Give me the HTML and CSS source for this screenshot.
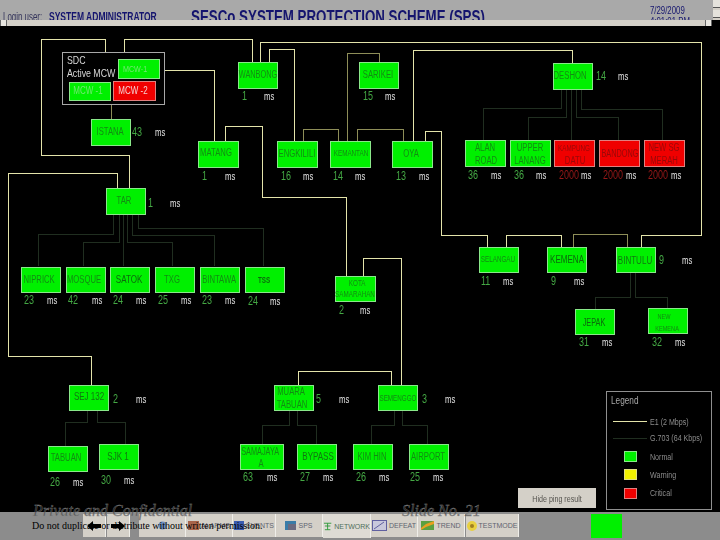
FILE: index.html
```html
<!DOCTYPE html>
<html lang="en">
<head>
<meta charset="utf-8">
<title>SESCo System Protection Scheme (SPS)</title>
<link rel="stylesheet" href="styles.css">
</head>
<body>
<div class="page">
  <header class="header">
    <div class="header-main">
      <span class="login">Login user:</span>
      <span class="user">SYSTEM ADMINISTRATOR</span>
      <h1 class="title">SESCo SYSTEM PROTECTION SCHEME (SPS)</h1>
      <div class="clock"><div>7/29/2009</div><div>4:01:01 PM</div></div>
    </div>
    <div class="vscroll"><span class="sbtn"></span><span class="sbtn"></span></div>
  </header>
  <div class="hscroll"><span class="hbtn"></span><span class="hspace"></span><span class="hbtn"></span><span class="hcorner"></span></div>

  <svg class="diagram" width="720" height="486" viewBox="0 26 720 486" xmlns="http://www.w3.org/2000/svg">
    <g class="e1">
      <path d="M105.5 52V39.5H41.5V155.5H129.5V188"/>
      <path d="M124.5 52V39.5H252.5V62"/>
      <path d="M165 70.5H214.5V141"/>
      <path d="M260.5 62V42.5H701.5V235.5H641.5V247"/>
      <path d="M269.5 62V49.5H294.5V141"/>
      <path d="M413.5 141V50.5H572.5V63"/>
      <path d="M425.5 141V131.5H441.5V235.5H487.5V247"/>
      <path d="M506.5 247V235.5H561.5V247"/>
      <path d="M117.5 188V173.5H8.5V356.5H91.5V385"/>
      <path d="M225.5 141V126.5H262.5V197.5H346.5V276"/>
      <path d="M298.5 385V371.5H391.5V385"/>
      <path d="M363.5 276V258.5H401.5V385"/>
    </g>
    <g class="e1-dim">
      <path d="M347.5 141V53.5H379.5V62"/>
      <path d="M303.5 141V129.5H338.5V141"/>
      <path d="M357.5 141V129.5H403.5V141"/>
      <path d="M573.5 247V234.5H627.5V247"/>
      <path d="M111.5 104V119"/>
    </g>
    <g class="g703">
      <path d="M561.5 89V108.5H483.5V140"/>
      <path d="M566.5 89V117.5H528.5V140"/>
      <path d="M571.5 89V140"/>
      <path d="M576.5 89V117.5H618.5V140"/>
      <path d="M581.5 89V109.5H662.5V140"/>
      <path d="M113.5 214V234.5H38.5V266"/>
      <path d="M119.5 214V242.5H83.5V266"/>
      <path d="M123.5 214V266"/>
      <path d="M127.5 214V242.5H172.5V266"/>
      <path d="M132.5 214V235.5H214.5V266"/>
      <path d="M138.5 214V228.5H263.5V266"/>
      <path d="M630.5 273V297.5H595.5V309"/>
      <path d="M635.5 273V297.5H667.5V308"/>
      <path d="M87.5 411V422.5H65.5V446"/>
      <path d="M97.5 411V422.5H125.5V444"/>
      <path d="M289.5 411V425.5H262.5V444"/>
      <path d="M297.5 411V425.5H316.5V444"/>
      <path d="M394.5 411V425.5H371.5V444"/>
      <path d="M402.5 411V425.5H427.5V444"/>
    </g>

    <!-- SDC panel -->
    <rect class="panel" x="62.5" y="52.5" width="102" height="52"/>
    <text class="sdc" x="67" y="64">SDC</text>
    <text class="sdc" x="67" y="77">Active MCW :</text>
    <rect class="ok" x="118.5" y="59.5" width="41" height="19"/><text class="pale small c" x="135" y="72">MCW-1</text>
    <rect class="ok" x="69.5" y="82.5" width="41" height="18"/><text class="pale c" x="88" y="94">MCW -1</text>
    <rect class="bad" x="113.5" y="81.5" width="42" height="19"/><text class="white c" x="133" y="94">MCW -2</text>

    <!-- nodes -->
    <g class="nodes">
      <rect class="ok" x="238.5" y="62.5" width="39" height="26"/><text class="c n" x="258" y="78">WANBONG</text>
      <rect class="ok" x="359.5" y="62.5" width="39" height="26"/><text class="c" x="378" y="78">SARIKEI</text>
      <rect class="ok" x="553.5" y="63.5" width="39" height="26"/><text class="c" x="570" y="79">DESHON</text>
      <rect class="ok" x="91.5" y="119.5" width="39" height="26"/><text class="c" x="110" y="135">ISTANA</text>
      <rect class="ok" x="198.5" y="141.5" width="40" height="26"/><text class="c" x="216" y="156">MATANG</text>
      <rect class="ok" x="277.5" y="141.5" width="40" height="26"/><text class="c" x="297" y="157">ENGKILILI</text>
      <rect class="ok" x="330.5" y="141.5" width="40" height="26"/><text class="c s" x="351" y="156">KEMANTAN</text>
      <rect class="ok" x="392.5" y="141.5" width="40" height="26"/><text class="c" x="411" y="157">OYA</text>
      <rect class="ok" x="465.5" y="140.5" width="40" height="26"/><text class="c" x="485" y="151">ALAN</text><text class="c" x="486" y="164">ROAD</text>
      <rect class="ok" x="510.5" y="140.5" width="40" height="26"/><text class="c" x="530" y="151">UPPER</text><text class="c" x="530" y="164">LANANG</text>
      <rect class="bad" x="554.5" y="140.5" width="40" height="26"/><text class="c d s" x="574" y="151">KAMPUNG</text><text class="c d" x="575" y="164">DATU</text>
      <rect class="bad" x="599.5" y="140.5" width="40" height="26"/><text class="c d n" x="620" y="157">BANDONG</text>
      <rect class="bad" x="644.5" y="140.5" width="40" height="26"/><text class="c d" x="664" y="151">NEW SG</text><text class="c d" x="664" y="164">MERAH</text>
      <rect class="ok" x="106.5" y="188.5" width="39" height="26"/><text class="c" x="124" y="204">TAR</text>
      <rect class="ok" x="21.5" y="267.5" width="39" height="25"/><text class="c" x="39" y="283">NIPRICK</text>
      <rect class="ok" x="66.5" y="267.5" width="39" height="25"/><text class="c" x="84" y="283">MOSQUE</text>
      <rect class="ok" x="110.5" y="267.5" width="39" height="25"/><text class="c strong" x="129" y="283">SATOK</text>
      <rect class="ok" x="155.5" y="267.5" width="39" height="25"/><text class="c" x="172" y="283">TXG</text>
      <rect class="ok" x="200.5" y="267.5" width="39" height="25"/><text class="c" x="219" y="283">BINTAWA</text>
      <rect class="ok" x="245.5" y="267.5" width="39" height="25"/><text class="c strong b" x="264" y="283">TSS</text>
      <rect class="ok" x="335.5" y="276.5" width="40" height="25"/><text class="c t" x="357" y="286">KOTA</text><text class="c t" x="355" y="297">SAMARAHAN</text>
      <rect class="ok" x="479.5" y="247.5" width="39" height="25"/><text class="c s" x="498" y="262">SELANGAU</text>
      <rect class="ok" x="547.5" y="247.5" width="39" height="25"/><text class="c strong" x="567" y="263">KEMENA</text>
      <rect class="ok" x="616.5" y="247.5" width="39" height="25"/><text class="c n2" x="635" y="264">BINTULU</text>
      <rect class="ok" x="575.5" y="309.5" width="39" height="25"/><text class="c strong j" x="594" y="326">JEPAK</text>
      <rect class="ok" x="648.5" y="308.5" width="39" height="25"/><text class="c t2" x="664" y="319">NEW</text><text class="c t2" x="667" y="331">KEMENA</text>
      <rect class="ok" x="69.5" y="385.5" width="39" height="25"/><text class="c n2" x="89" y="400">SEJ 132</text>
      <rect class="ok" x="274.5" y="385.5" width="39" height="25"/><text class="c" x="291" y="395">MUARA</text><text class="c" x="292" y="408">TABUAN</text>
      <rect class="ok" x="378.5" y="385.5" width="39" height="25"/><text class="c s" x="398" y="401">SEMENGGO</text>
      <rect class="ok" x="48.5" y="446.5" width="39" height="25"/><text class="c" x="66" y="461">TABUAN</text>
      <rect class="ok" x="99.5" y="444.5" width="39" height="25"/><text class="c n2" x="118" y="460">SJK 1</text>
      <rect class="ok" x="240.5" y="444.5" width="43" height="25"/><text class="c n" x="260" y="455">SAMAJAYA</text><text class="c" x="261" y="467">A</text>
      <rect class="ok" x="297.5" y="444.5" width="39" height="25"/><text class="c n2" x="318" y="460">BYPASS</text>
      <rect class="ok" x="353.5" y="444.5" width="39" height="25"/><text class="c" x="372" y="460">KIM HIN</text>
      <rect class="ok" x="409.5" y="444.5" width="39" height="25"/><text class="c" x="428" y="460">AIRPORT</text>
    </g>

    <!-- latency readouts -->
    <g class="num">
      <text x="242" y="100">1</text><text x="132" y="136">43</text><text x="148" y="207">1</text>
      <text x="363" y="100">15</text><text x="596" y="80">14</text><text x="202" y="180">1</text>
      <text x="281" y="180">16</text><text x="333" y="180">14</text><text x="396" y="180">13</text>
      <text x="468" y="179">36</text><text x="514" y="179">36</text>
      <text class="nr" x="559" y="179">2000</text><text class="nr" x="603" y="179">2000</text><text class="nr" x="648" y="179">2000</text>
      <text x="24" y="304">23</text><text x="68" y="304">42</text><text x="113" y="304">24</text>
      <text x="158" y="304">25</text><text x="202" y="304">23</text><text x="248" y="305">24</text>
      <text x="339" y="314">2</text><text x="481" y="285">11</text><text x="551" y="285">9</text>
      <text x="659" y="264">9</text><text x="579" y="346">31</text><text x="652" y="346">32</text>
      <text x="113" y="403">2</text><text x="316" y="403">5</text><text x="422" y="403">3</text>
      <text x="50" y="486">26</text><text x="101" y="484">30</text><text x="243" y="481">63</text>
      <text x="300" y="481">27</text><text x="356" y="481">26</text><text x="410" y="481">25</text>
    </g>
    <g class="ms">
      <text x="264" y="100">ms</text><text x="155" y="136">ms</text><text x="170" y="207">ms</text>
      <text x="385" y="100">ms</text><text x="618" y="80">ms</text><text x="225" y="180">ms</text>
      <text x="303" y="180">ms</text><text x="355" y="180">ms</text><text x="419" y="180">ms</text>
      <text x="491" y="179">ms</text><text x="536" y="179">ms</text><text x="581" y="179">ms</text>
      <text x="626" y="179">ms</text><text x="671" y="179">ms</text>
      <text x="47" y="304">ms</text><text x="92" y="304">ms</text><text x="136" y="304">ms</text>
      <text x="181" y="304">ms</text><text x="225" y="304">ms</text><text x="270" y="305">ms</text>
      <text x="360" y="314">ms</text><text x="503" y="285">ms</text><text x="574" y="285">ms</text>
      <text x="682" y="264">ms</text><text x="602" y="346">ms</text><text x="675" y="346">ms</text>
      <text x="136" y="403">ms</text><text x="339" y="403">ms</text><text x="445" y="403">ms</text>
      <text x="73" y="486">ms</text><text x="124" y="484">ms</text><text x="267" y="481">ms</text>
      <text x="323" y="481">ms</text><text x="379" y="481">ms</text><text x="433" y="481">ms</text>
    </g>

    <!-- legend -->
    <rect class="legend" x="606.5" y="391.5" width="105" height="118"/>
    <g class="leg-text">
      <text class="leg-title" x="611" y="404">Legend</text>
      <text x="650" y="425">E1 (2 Mbps)</text>
      <text x="650" y="441">G.703 (64 Kbps)</text>
      <text x="650" y="460">Normal</text>
      <text x="650" y="478">Warning</text>
      <text x="650" y="496">Critical</text>
    </g>
    <path class="e1" d="M613 421.5H647"/>
    <path class="g703" d="M613 438.5H647"/>
    <rect class="ok" x="624.5" y="451.5" width="12" height="10"/>
    <rect class="warn" x="624.5" y="469.5" width="12" height="10"/>
    <rect class="bad" x="624.5" y="488.5" width="12" height="10"/>
  </svg>

  <button class="hide-ping"><span>Hide ping result</span></button>

  <footer class="toolbar">
    <div class="tool tool-nav"><svg width="14" height="10" viewBox="0 0 14 10"><path d="M0 5L6 0V3H14V7H6V10Z"/></svg></div>
    <div class="tool tool-nav"><svg width="14" height="10" viewBox="0 0 14 10"><path d="M14 5L8 0V3H0V7H8V10Z"/></svg></div>
    <div class="tool-gap"></div>
    <div class="tool tool-a"><svg width="9" height="9" viewBox="0 0 9 9"><circle cx="4.5" cy="4.5" r="4" fill="#6f8fc0"/></svg></div>
    <div class="tool tool-a"><svg width="11" height="9" viewBox="0 0 11 9"><rect width="11" height="9" fill="#a8654a"/></svg>ALARMS</div>
    <div class="tool tool-b"><svg width="10" height="9" viewBox="0 0 10 9"><rect width="10" height="9" fill="#3a5cb0"/></svg>EVENTS</div>
    <div class="tool tool-a"><svg width="11" height="9" viewBox="0 0 11 9"><rect width="11" height="9" fill="#3a7ca8"/><rect x="3" y="3" width="8" height="6" fill="#6a6a80"/></svg>SPS</div>
    <div class="tool tool-a tool-active"><svg width="10" height="10" viewBox="0 0 10 10"><path d="M1 2H9M5 2V9M2 5H8M2 9H8" stroke="#2e9a3a" fill="none"/></svg>NETWORK</div>
    <div class="tool tool-a"><svg width="15" height="11" viewBox="0 0 15 11"><rect x=".5" y=".5" width="14" height="10" fill="#c8c8dc" stroke="#6060a0"/><path d="M2 9L12 2" stroke="#6060a0"/></svg>DEFEAT</div>
    <div class="tool tool-a"><svg width="13" height="9" viewBox="0 0 13 9"><rect width="13" height="9" fill="#5aa040"/><path d="M0 7L5 3L13 0V3L5 6L0 9Z" fill="#e8a020"/></svg>TREND</div>
    <div class="tool tool-c"><svg width="10" height="10" viewBox="0 0 10 10"><circle cx="5" cy="5" r="5" fill="#e8d040"/><circle cx="5" cy="5" r="2" fill="#a08020"/></svg>TESTMODE</div>
    <div class="status"></div>
  </footer>

  <div class="slide-title slide-private">Private and Confidential</div>
  <div class="slide-title slide-number">Slide No. 21</div>
  <div class="slide-note">Do not duplicate or distribute without written permission.</div>
</div>
</body>
</html>
```

FILE: styles.css
```css
* { box-sizing: border-box; }
html, body { margin: 0; padding: 0; background: #000; }
.page {
  position: relative;
  width: 720px;
  height: 540px;
  overflow: hidden;
  display: flex;
  flex-direction: column;
  font-family: "Liberation Sans", Arial, sans-serif;
}

/* header: the original font is condensed, so the text is squeezed horizontally */
.header { display: flex; height: 20px; flex: none; background: #a9a9a9; overflow: hidden; }
.header-main { flex: 1; display: flex; align-items: flex-start; padding-left: 3px; color: #14146e; overflow: hidden; filter: blur(.3px); }
.login, .user, .title, .clock { flex: none; transform-origin: left center; white-space: nowrap; }
.login { width: 46px; font-size: 12px; line-height: 12px; margin-top: 11px; color: #33335a; transform: scaleX(.66); }
.user { width: 142px; font-size: 12px; font-weight: 700; line-height: 12px; margin-top: 11px; transform: scaleX(.71); }
.title { width: 459px; margin: 7px 0 0; font-size: 18px; line-height: 20px; font-weight: 700; transform: scaleX(.74); }
.clock { font-size: 11px; line-height: 11px; margin-top: 5px; transform: scaleX(.71); }
.vscroll { width: 7px; flex: none; display: flex; flex-direction: column; background: #d4d0c8; }
.sbtn { height: 8px; margin-bottom: 2px; background: #e4e2dc; border-bottom: 1px solid #555; }
.hscroll { height: 6px; flex: none; display: flex; background: #d4d0c8; }
.hbtn { width: 7px; background: #e8e6e0; border-right: 1px solid #666; border-left: 1px solid #666; }
.hspace { width: 698px; }
.hcorner { width: 8px; background: #000; }

/* diagram */
.diagram { display: block; flex: none; background: #000; filter: blur(.35px); }
.diagram path { fill: none; shape-rendering: crispEdges; }
.e1 path, path.e1 { stroke: #e4e4aa; }
.e1-dim path { stroke: #8e8e58; }
.g703 path, path.g703 { stroke: #202e20; }
.panel { fill: #000; stroke: #a8a8a8; }
.legend { fill: #000; stroke: #8f8f8f; }
.ok, .bad, .warn { shape-rendering: crispEdges; }
.ok { fill: #00f000; stroke: #8ae88a; }
.bad { fill: #f00000; stroke: #e08080; }
.warn { fill: #f0f000; stroke: #e0e080; }
.diagram text {
  font-family: "Liberation Sans", Arial, sans-serif;
  transform-box: fill-box;
  transform-origin: left center;
  transform: scaleX(.8);
}
.diagram text.c { text-anchor: middle; transform-origin: center; }
.sdc { font-size: 11px; fill: #d8d8d8; }
.pale { font-size: 10px; fill: #70e870; }
.pale.small { font-size: 9px; }
.white { font-size: 10px; fill: #f4d0d0; }
.diagram .nodes text { transform: scaleX(.7); }
.nodes text { font-size: 11px; fill: #128c12; }
.nodes .d { fill: #980808; }
.nodes .s { font-size: 9px; }
.nodes .t { font-size: 9px; }
.nodes .t2 { font-size: 8px; }
.nodes .n { font-size: 10.5px; }
.nodes .n2 { font-size: 11.5px; fill: #107810; }
.nodes .strong { font-size: 11.5px; fill: #0c6a0c; }
.nodes .j { font-size: 10.5px; }
.nodes .b { font-size: 9px; font-weight: 700; }
.num text { font-size: 12px; fill: #44a844; }
.diagram .num text { transform: scaleX(.75); }
.num .nr { fill: #981818; }
.ms text { font-size: 11px; fill: #e4e4e4; }
.diagram .ms text { transform: scaleX(.7); }
.leg-text text { font-size: 9.5px; fill: #8c8c8c; }
.diagram .leg-text text { transform: scaleX(.75); }
.leg-text .leg-title { font-size: 11px; fill: #a8a8a8; }

/* button over diagram */
.hide-ping {
  position: absolute;
  left: 518px;
  top: 488px;
  width: 78px;
  height: 20px;
  padding: 0;
  border: 0;
  background: #d4d0c8;
  color: #55534e;
  font: 9.5px "Liberation Sans", Arial, sans-serif;
}
.hide-ping span { display: inline-block; transform: scaleX(.75); white-space: nowrap; }

/* bottom toolbar */
.toolbar { flex: 1; display: flex; align-items: flex-start; padding: 2px 0 0 83px; background: #8c8c8c; }
.tool {
  height: 23px;
  display: flex;
  align-items: center;
  justify-content: center;
  gap: 2px;
  background: #d4d0c8;
  border-right: 1px solid #efeee9;
  color: #5f6470;
  font-size: 7px;
}
.tool-nav { width: 23px; margin-right: 1px; }
.tool-gap { width: 8px; }
.tool-a { width: 47px; }
.tool-b { width: 43px; }
.tool-c { width: 53px; margin-left: 1px; }
.tool-active { height: 24px; width: 48px; background: #dedbd4; color: #50705a; }
.status { width: 31px; height: 24px; margin-left: 72px; background: #00f000; }

/* slide footer over the toolbar */
.slide-title {
  position: absolute;
  top: 502px;
  font: italic 16px "Liberation Serif", "Times New Roman", serif;
  color: rgba(40, 40, 40, .6);
  -webkit-text-stroke: .35px #8a8a8a;
  white-space: nowrap;
}
.slide-private { left: 33px; }
.slide-number { left: 402px; }
.slide-note {
  position: absolute;
  left: 32px;
  top: 520px;
  font: 10px "Liberation Serif", "Times New Roman", serif;
  color: #000;
  white-space: nowrap;
}
```
